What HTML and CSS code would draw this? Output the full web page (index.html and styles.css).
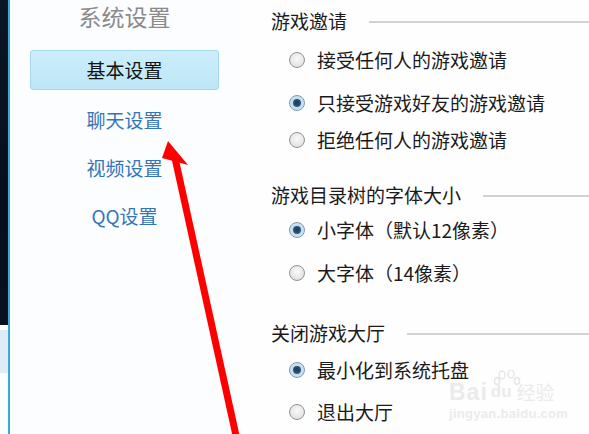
FILE: index.html
```html
<!DOCTYPE html>
<html lang="zh-CN">
<head>
<meta charset="utf-8">
<title>系统设置</title>
<link rel="stylesheet" href="styles.css">
</head>
<body>
<div class="app">
  <div class="edge">
    <div class="edge-dark"></div>
    <div class="edge-light"></div>
  </div>
  <nav class="side">
    <div class="side-title">系统设置</div>
    <div class="nav-item active">基本设置</div>
    <div class="nav-item">聊天设置</div>
    <div class="nav-item">视频设置</div>
    <div class="nav-item">QQ设置</div>
  </nav>
  <main class="panel">
    <section class="group g1">
      <div class="heading"><span>游戏邀请</span><i class="rule"></i></div>
      <label class="opt o1"><span class="radio"></span>接受任何人的游戏邀请</label>
      <label class="opt o2"><span class="radio checked"></span>只接受游戏好友的游戏邀请</label>
      <label class="opt o3"><span class="radio"></span>拒绝任何人的游戏邀请</label>
    </section>
    <section class="group g2">
      <div class="heading"><span>游戏目录树的字体大小</span><i class="rule"></i></div>
      <label class="opt o4"><span class="radio checked"></span>小字体（默认12像素）</label>
      <label class="opt o5"><span class="radio"></span>大字体（14像素）</label>
    </section>
    <section class="group g3">
      <div class="heading"><span>关闭游戏大厅</span><i class="rule"></i></div>
      <label class="opt o6"><span class="radio checked"></span>最小化到系统托盘</label>
      <label class="opt o7"><span class="radio"></span>退出大厅</label>
    </section>
  </main>
</div>

<div class="watermark">
  <svg class="paw" width="28" height="20" viewBox="0 0 28 20">
    <ellipse cx="9" cy="5" rx="3" ry="4" fill="none" stroke="#e6e6e6" stroke-width="1.5"/>
    <ellipse cx="18" cy="4" rx="3" ry="4" fill="none" stroke="#e6e6e6" stroke-width="1.5"/>
    <ellipse cx="4" cy="11" rx="2.5" ry="3.5" fill="none" stroke="#e6e6e6" stroke-width="1.5"/>
    <ellipse cx="24" cy="11" rx="2.5" ry="3.5" fill="none" stroke="#e6e6e6" stroke-width="1.5"/>
  </svg>
  <div class="wm-line"><span class="wm-bai">Bai</span><span class="wm-du">du</span><span class="wm-jy">经验</span></div>
  <div class="wm-url">jingyan.baidu.com</div>
</div>

<svg class="arrow" width="589" height="434" viewBox="0 0 589 434">
  <line x1="175" y1="158" x2="237" y2="440" stroke="#ff0000" stroke-width="7"/>
  <polygon points="168,141 162,158 188,165" fill="#ff0000"/>
</svg>
</body>
</html>
```

FILE: styles.css
```css
* { box-sizing: border-box; margin: 0; padding: 0; }

html, body {
  width: 589px;
  height: 434px;
  overflow: hidden;
  background: #fdfefe;
  font-family: "Noto Sans CJK SC", "Microsoft YaHei", "Noto Sans", sans-serif;
}

.app {
  display: flex;
  height: 434px;
}

.edge {
  width: 10px;
  border-right: 2px solid #36abdc;
  display: flex;
  flex-direction: column;
  background: #fbfdfe;
}

.edge-dark {
  height: 325px;
  background: linear-gradient(180deg, #0b1626 0%, #06101c 60%, #08111d 100%);
}

.edge-light {
  margin-top: 5px;
  height: 43px;
  background: #ddecf8;
}

.side {
  width: 230px;
  padding: 0 21px 0 20px;
  background: #fbfdfe;
  display: flex;
  flex-direction: column;
  align-items: stretch;
}

.side-title {
  height: 32px;
  line-height: 32px;
  text-align: center;
  font-size: 23px;
  color: #8b8b8b;
}

.nav-item {
  height: 48px;
  line-height: 48px;
  text-align: center;
  font-size: 19px;
  color: #3575b7;
}

.nav-item.active {
  margin-top: 18px;
  margin-bottom: 6px;
  height: 40px;
  line-height: 38px;
  color: #111;
  border: 1px solid #a3d8ee;
  border-radius: 3px;
  background: linear-gradient(180deg, #cdeefb 0%, #bde6f6 100%);
}

.panel {
  flex: 1;
  padding-left: 31px;
  background: #fefefe;
  display: flex;
  flex-direction: column;
}

.heading {
  height: 24px;
  display: flex;
  align-items: center;
  gap: 22px;
  font-size: 19px;
  line-height: 24px;
  color: #1b1b1b;
  white-space: nowrap;
}

.rule {
  flex: 1;
  height: 2px;
  background: #d2d2d2;
  margin-top: 1px;
}

.g1 .heading { margin-top: 9px; }
.g2 .heading { margin-top: 31px; }
.g3 .heading { margin-top: 36px; }

.opt {
  height: 24px;
  display: flex;
  align-items: center;
  gap: 12px;
  padding-left: 18px;
  font-size: 19px;
  line-height: 24px;
  color: #1b1b1b;
  white-space: nowrap;
}

.o1 { margin-top: 15px; }
.o2 { margin-top: 19px; }
.o3 { margin-top: 13px; }
.o4 { margin-top: 11px; }
.o5 { margin-top: 19px; }
.o6 { margin-top: 13px; }
.o7 { margin-top: 18px; }

.radio {
  flex: none;
  width: 16px;
  height: 16px;
  border-radius: 50%;
  border: 1px solid #929394;
  background: radial-gradient(circle at 50% 40%, #fafafa 0%, #e6e6e6 60%, #d6d6d6 100%);
  position: relative;
}

.radio.checked {
  border-color: #7f98ad;
  background: radial-gradient(circle, #a9cfe8 0%, #cde4f2 70%, #e2eef6 100%);
}

.radio.checked::after {
  content: "";
  position: absolute;
  left: 3px;
  top: 3px;
  width: 8px;
  height: 8px;
  border-radius: 50%;
  background: radial-gradient(circle at 50% 45%, #1e3954 0%, #2c5074 55%, #5a95c2 100%);
}

.watermark {
  position: absolute;
  left: 449px;
  top: 370px;
  width: 110px;
  color: #ebebeb;
  font-family: "Liberation Sans", Arial, sans-serif;
}

.paw {
  position: absolute;
  left: 44px;
  top: 0;
}

.wm-line {
  margin-top: 13px;
  display: flex;
  align-items: center;
  height: 18px;
}

.wm-bai {
  font-size: 23px;
  line-height: 18px;
  font-weight: bold;
  letter-spacing: 1px;
}

.wm-du {
  margin-left: 3px;
  font-size: 17px;
  line-height: 18px;
  font-weight: bold;
}

.wm-jy {
  margin-left: 5px;
  font-size: 19px;
  line-height: 18px;
  font-family: "Noto Sans CJK SC", sans-serif;
}

.wm-url {
  margin-top: 6px;
  font-size: 13px;
  line-height: 14px;
  font-weight: bold;
  letter-spacing: 0.3px;
}

.arrow {
  position: absolute;
  left: 0;
  top: 0;
  pointer-events: none;
}
```
